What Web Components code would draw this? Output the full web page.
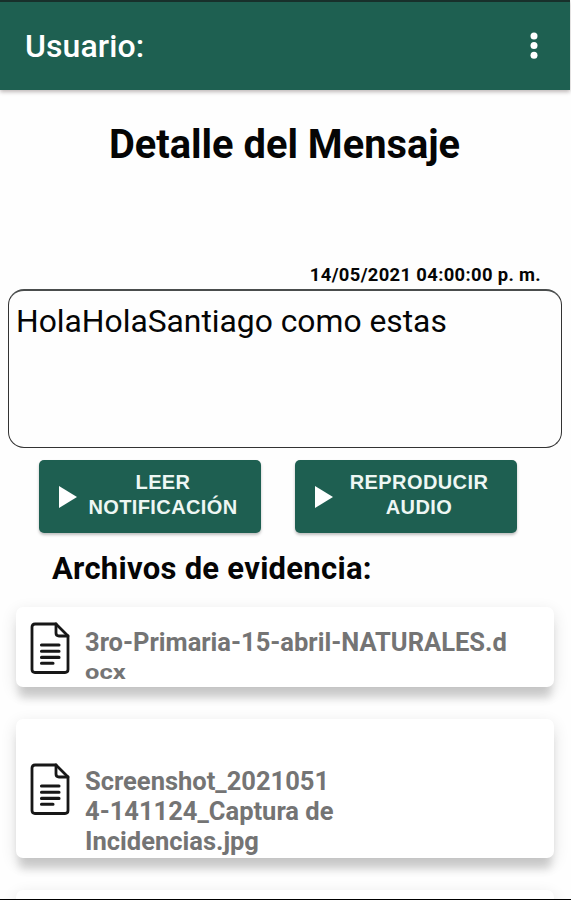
<!DOCTYPE html>
<html lang="es">
<head>
<meta charset="UTF-8">
<meta name="viewport" content="width=device-width, initial-scale=1">
<title>Detalle del Mensaje</title>
<style>
    html, body {
        margin: 0;
        height: 100%;
        overflow: hidden;
        background: #fefefe;
        font-family: Roboto, "Liberation Sans", sans-serif;
    }
</style>
</head>
<body>
<mensaje-page>
    <app-toolbar slot="toolbar">Usuario:</app-toolbar>
    <mensaje-detalle fecha="14/05/2021 04:00:00 p. m.">HolaHolaSantiago como estas</mensaje-detalle>
    <audio-button slot="acciones">LEER<br>NOTIFICACIÓN</audio-button>
    <audio-button slot="acciones">REPRODUCIR<br>AUDIO</audio-button>
    <archivo-card slot="archivos" class="corta">3ro-Primaria-15-abril-NATURALES.d<br><small>ocx</small></archivo-card>
    <archivo-card slot="archivos">Screenshot_2021051<br>4-141124_Captura de<br>Incidencias.jpg</archivo-card>
    <archivo-card slot="archivos"></archivo-card>
</mensaje-page>

<script>
// Página completa
class MensajePage extends HTMLElement {
    constructor() {
        super();
        this.attachShadow({ mode: 'open' });
    }

    connectedCallback() {
        this.shadowRoot.innerHTML = `
            <style>
                :host {
                    display: flex;
                    flex-direction: column;
                    box-sizing: border-box;
                    height: 900px;
                    overflow: hidden;
                    border-bottom: 1px solid #000;
                    color: #050505;
                }
                h1, h2 {
                    margin: 0;
                    font-weight: 700;
                    white-space: nowrap;
                }
                h1 {
                    margin: 32px 2px 0 0;
                    font-size: 39.8px;
                    line-height: 46px;
                    text-align: center;
                }
                h2 {
                    margin: 18px 0 0 52px;
                    font-size: 31px;
                    letter-spacing: .27px;
                    line-height: 36px;
                }
                .acciones {
                    display: flex;
                    gap: 34px;
                    margin: 12px 0 0 39px;
                }
                .archivos {
                    display: flex;
                    flex-direction: column;
                    gap: 32px;
                    margin: 20px 17px 0 16px;
                }
            </style>

            <slot name="toolbar"></slot>
            <h1>Detalle del Mensaje</h1>
            <slot></slot>
            <div class="acciones"><slot name="acciones"></slot></div>
            <h2>Archivos de evidencia:</h2>
            <div class="archivos"><slot name="archivos"></slot></div>
        `;
    }
}

// Barra superior
class AppToolbar extends HTMLElement {
    constructor() {
        super();
        this.attachShadow({ mode: 'open' });
    }

    connectedCallback() {
        this.shadowRoot.innerHTML = `
            <style>
                :host {
                    display: flex;
                    align-items: center;
                    justify-content: space-between;
                    box-sizing: border-box;
                    flex: none;
                    height: 90px;
                    margin-right: 1px;
                    padding: 0 32px 0 25px;
                    border-top: 2px solid #18302b;
                    background: #1e6051;
                    box-shadow: 0 2px 4px rgba(40, 20, 20, .3);
                    color: #fff;
                    font-size: 32px;
                    font-weight: 500;
                    letter-spacing: .1px;
                }
                svg {
                    display: block;
                    width: 8px;
                    height: 28px;
                    fill: #fff;
                }
            </style>

            <span><slot></slot></span>
            <svg viewBox="0 0 8 28">
                <circle cx="4" cy="4" r="3.500"/>
                <circle cx="4" cy="13.500" r="3.500"/>
                <circle cx="4" cy="23.200" r="3.500"/>
            </svg>
        `;
    }
}

// Fecha y texto del mensaje
class MensajeDetalle extends HTMLElement {
    constructor() {
        super();
        this.attachShadow({ mode: 'open' });
    }

    connectedCallback() {
        const fecha = this.getAttribute('fecha') || '';

        this.shadowRoot.innerHTML = `
            <style>
                :host {
                    display: block;
                    margin: 96px 9px 0 8px;
                    white-space: nowrap;
                }
                .fecha {
                    padding-right: 21px;
                    font-size: 18.4px;
                    font-weight: 700;
                    letter-spacing: .35px;
                    line-height: 21px;
                    text-align: right;
                }
                .texto {
                    box-sizing: border-box;
                    height: 159px;
                    margin-top: 4px;
                    padding: 12px 7px;
                    border: 1.5px solid #333;
                    border-top: 2px solid #4a4d4d;
                    border-radius: 16px;
                    font-size: 31.8px;
                    line-height: 37px;
                }
            </style>

            <div class="fecha">${fecha}</div>
            <div class="texto"><slot></slot></div>
        `;
    }
}

// Botón verde con icono de play
class AudioButton extends HTMLElement {
    constructor() {
        super();
        this.attachShadow({ mode: 'open' });
    }

    connectedCallback() {
        this.shadowRoot.innerHTML = `
            <style>
                :host {
                    display: block;
                    width: 222px;
                    height: 73px;
                }
                button {
                    display: flex;
                    align-items: center;
                    box-sizing: border-box;
                    width: 100%;
                    height: 100%;
                    padding: 0 24px 3px 20px;
                    border: 0;
                    border-radius: 5px;
                    background: #1e5f51;
                    box-shadow: 0 2px 3px rgba(0, 0, 0, .25);
                    color: #eef7f4;
                    font: 700 20px/25px "Liberation Sans", Arial, sans-serif;
                    letter-spacing: .4px;
                }
                svg {
                    flex: none;
                    width: 18px;
                    height: 22px;
                    margin: 3px 12px 0 0;
                    fill: #fff;
                }
                span {
                    flex: 1;
                    margin: 0 -10px;
                    padding-bottom: 1px;
                    text-align: center;
                    white-space: nowrap;
                }
            </style>

            <button type="button">
                <svg viewBox="0 0 18 22"><path d="M0 0L18 11L0 22Z"/></svg>
                <span><slot></slot></span>
            </button>
        `;
    }
}

// Tarjeta de archivo adjunto
class ArchivoCard extends HTMLElement {
    constructor() {
        super();
        this.attachShadow({ mode: 'open' });
    }

    connectedCallback() {
        this.shadowRoot.innerHTML = `
            <style>
                :host {
                    display: flex;
                    flex: none;
                    align-items: flex-start;
                    box-sizing: border-box;
                    height: 139px;
                    padding: 44px 0 0 14px;
                    border-radius: 7px;
                    background: #fff;
                    box-shadow: 0 14px 9px -3px rgba(0, 0, 0, .15), 0 5px 16px rgba(0, 0, 0, .12);
                    color: #747474;
                    font-size: 25.5px;
                    font-weight: 700;
                    line-height: 30px;
                    white-space: nowrap;
                }
                :host(.corta) {
                    height: 80px;
                    padding-top: 15px;
                }
                svg {
                    flex: none;
                    width: 40px;
                    height: 52px;
                    margin-right: 15px;
                    fill: none;
                    stroke: #171717;
                    stroke-width: 2.8;
                    stroke-linecap: round;
                    stroke-linejoin: round;
                }
                .lineas {
                    stroke-width: 3.1;
                }
                .nombre {
                    padding-top: 3px;
                }
                :host(.corta) .nombre {
                    padding-top: 5px;
                }
                ::slotted(small) {
                    display: inline-block;
                    font-size: inherit;
                    transform: scaleY(.78);
                    transform-origin: 0 50%;
                }
            </style>

            <svg viewBox="0 0 40 52">
                <path d="M5 2H26L38 14V47.500Q38 50.500 35 50.500H5Q2 50.500 2 47.500V5Q2 2 5 2Z"/>
                <path d="M26 2V11Q26 14 29 14H38"/>
                <path class="lineas" d="M11.500 23H29M11.500 29.200H29M11.500 35.400H29M11.500 41.300H23"/>
            </svg>
            <div class="nombre"><slot></slot></div>
        `;
    }
}

// Registrar los componentes
window.customElements.define('app-toolbar', AppToolbar);
window.customElements.define('mensaje-detalle', MensajeDetalle);
window.customElements.define('audio-button', AudioButton);
window.customElements.define('archivo-card', ArchivoCard);
window.customElements.define('mensaje-page', MensajePage);
</script>
</body>
</html>
